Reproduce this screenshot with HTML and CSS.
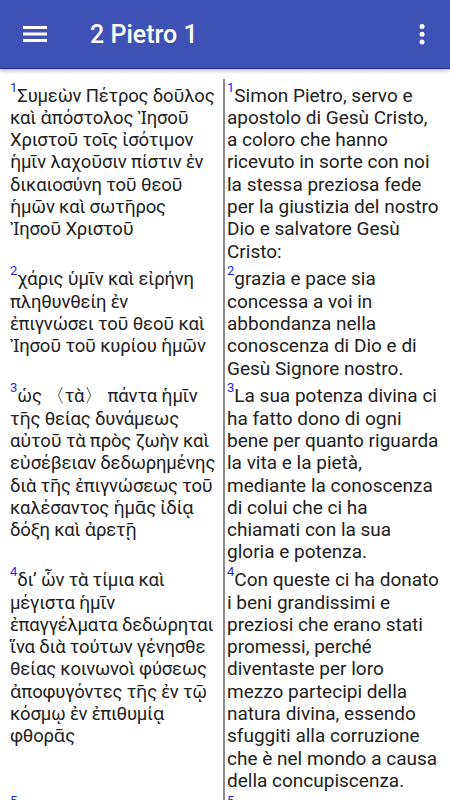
FILE: index.html
```html
<!DOCTYPE html>
<html lang="it">
<head>
  <meta charset="UTF-8" />
  <meta name="viewport" content="width=device-width, initial-scale=1" />
  <title>2 Pietro 1</title>
  <link rel="stylesheet" href="styles.css">
</head>
<body>

  <header class="appbar">
    <svg class="menu" width="24" height="16" viewBox="0 0 24 16">
      <rect x="0" y="0" width="24" height="3" fill="#fff"/>
      <rect x="0" y="6.5" width="24" height="3" fill="#fff"/>
      <rect x="0" y="13" width="24" height="3" fill="#fff"/>
    </svg>
    <h1 class="title">2 Pietro 1</h1>
    <svg class="more" width="6" height="21" viewBox="0 0 6 21">
      <circle cx="3" cy="2.6" r="2.5" fill="#fff"/>
      <circle cx="3" cy="10.3" r="2.5" fill="#fff"/>
      <circle cx="3" cy="18" r="2.5" fill="#fff"/>
    </svg>
  </header>

  <main class="chapter">
    <div class="verse">
      <p class="greek"><sup>1</sup>Συμεὼν Πέτρος δοῦλος<br>καὶ ἀπόστολος Ἰησοῦ<br>Χριστοῦ τοῖς ἰσότιμον<br>ἡμῖν λαχοῦσιν πίστιν ἐν<br>δικαιοσύνη τοῦ θεοῦ<br>ἡμῶν καὶ σωτῆρος<br>Ἰησοῦ Χριστοῦ</p>
      <p class="ital"><sup>1</sup>Simon Pietro, servo e<br>apostolo di Gesù Cristo,<br>a coloro che hanno<br>ricevuto in sorte con noi<br>la stessa preziosa fede<br>per la giustizia del nostro<br>Dio e salvatore Gesù<br>Cristo:</p>
    </div>
    <div class="verse">
      <p class="greek"><sup>2</sup>χάρις ὑμῖν καὶ εἰρήνη<br>πληθυνθείη ἐν<br>ἐπιγνώσει τοῦ θεοῦ καὶ<br>Ἰησοῦ τοῦ κυρίου ἡμῶν</p>
      <p class="ital"><sup>2</sup>grazia e pace sia<br>concessa a voi in<br>abbondanza nella<br>conoscenza di Dio e di<br>Gesù Signore nostro.</p>
    </div>
    <div class="verse">
      <p class="greek"><sup>3</sup>ὡς 〈τὰ〉 πάντα ἡμῖν<br>τῆς θείας δυνάμεως<br>αὐτοῦ τὰ πρὸς ζωὴν καὶ<br>εὐσέβειαν δεδωρημένης<br>διὰ τῆς ἐπιγνώσεως τοῦ<br>καλέσαντος ἡμᾶς ἰδίᾳ<br>δόξη καὶ ἀρετῇ</p>
      <p class="ital"><sup>3</sup>La sua potenza divina ci<br>ha fatto dono di ogni<br>bene per quanto riguarda<br>la vita e la pietà,<br>mediante la conoscenza<br>di colui che ci ha<br>chiamati con la sua<br>gloria e potenza.</p>
    </div>
    <div class="verse">
      <p class="greek"><sup>4</sup>δι’ ὧν τὰ τίμια καὶ<br>μέγιστα ἡμῖν<br>ἐπαγγέλματα δεδώρηται<br>ἵνα διὰ τούτων γένησθε<br>θείας κοινωνοὶ φύσεως<br>ἀποφυγόντες τῆς ἐν τῷ<br>κόσμῳ ἐν ἐπιθυμίᾳ<br>φθορᾶς</p>
      <p class="ital"><sup>4</sup>Con queste ci ha donato<br>i beni grandissimi e<br>preziosi che erano stati<br>promessi, perché<br>diventaste per loro<br>mezzo partecipi della<br>natura divina, essendo<br>sfuggiti alla corruzione<br>che è nel mondo a causa<br>della concupiscenza.</p>
    </div>
    <div class="verse">
      <p class="greek"><sup>5</sup>καὶ αὐτὸ τοῦτο δὲ<br>σπουδὴν πᾶσαν</p>
      <p class="ital"><sup>5</sup>Per questo mettete ogni<br>impegno</p>
    </div>
  </main>

</body>
</html>
```

FILE: styles.css
```css
body {
  margin: 0;
  height: 800px;
  overflow: hidden;
  font-family: Roboto, "Noto Sans", sans-serif;
  background: #fff;
  color: #212121;
}
.appbar {
  display: flex;
  align-items: center;
  height: 68px;
  padding: 0 25px 0 23px;
  background: #3f51b5;
  border-bottom: 1px solid #1a2ba0;
  box-shadow: 0 2px 4px rgba(0,0,0,0.25);
  position: relative;
  z-index: 1;
}
.menu,
.more {
  flex: none;
}
.title {
  flex: 1;
  margin: 0 0 0 43px;
  color: #fff;
  font-size: 25px;
  font-weight: 500;
}
.chapter {
  padding-top: 10px;
}
.verse {
  display: grid;
  grid-template-columns: 213px 1fr;
  padding: 0 8px 0 10px;
}
.verse p {
  margin: 0;
  padding: 5.5px 0 0;
  font-size: 19px;
  line-height: 22.3px;
  white-space: nowrap;
}
.verse .greek {
  font-size: 18.5px;
  letter-spacing: -0.2px;
}
.verse .ital {
  border-left: 2px solid #8c8c8c;
  padding-left: 2px;
}
sup {
  color: #1f1fe6;
  font-size: 13px;
  letter-spacing: 0;
  vertical-align: 10px;
  line-height: 0;
}
```
